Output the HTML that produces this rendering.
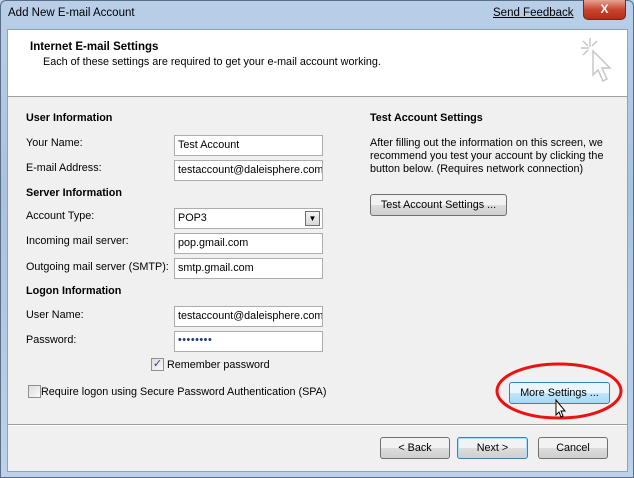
<!DOCTYPE html>
<html><head><meta charset="utf-8"><style>
*{box-sizing:border-box;margin:0;padding:0}
body{width:634px;height:478px;overflow:hidden;background:#bcd2ea;font-family:"Liberation Sans",sans-serif;font-size:10.8px;color:#000;position:relative}
.a{position:absolute;white-space:nowrap}
.frame{position:absolute;left:0;top:0;width:634px;height:478px;background:linear-gradient(#b9cfe8,#a9c2e0 40%,#bcd2ea);border:1px solid #5a6e86;border-radius:6px 6px 0 0}
.client{position:absolute;left:7px;top:29px;width:621px;height:443px;background:#f0f0f0;border:1px solid #8da2bb}
.hdr{position:absolute;left:0;top:0;width:619px;height:67px;background:#fff;border-bottom:1px solid #a0a0a0}
.in{position:absolute;height:21px;background:#fff;border:1px solid #abadb3;padding:3px 0 0 3px;width:149px;overflow:hidden}
.b{font-weight:bold}
.btn{position:absolute;height:22px;border:1px solid #707070;border-radius:3px;background:linear-gradient(#f2f2f2 50%,#dddddd 50%,#cfcfcf);text-align:center;padding-top:4px}
.cb{position:absolute;width:13px;height:13px;border:1px solid #8f8f8f;background:linear-gradient(135deg,#dcdcdc,#fafafa)}
</style></head><body>
<div class="frame"></div>
<div class="a" style="left:8px;top:7px;font-size:11.5px;color:#000">Add New E-mail Account</div>
<div class="a" style="left:493px;top:7px;font-size:11.5px;text-decoration:underline">Send Feedback</div>
<div class="a" style="left:583px;top:0;width:43px;height:20px;border:1px solid #6d2a20;border-top:none;border-radius:0 0 5px 5px;background:linear-gradient(#e8a493,#c7462f 50%,#b82c14);color:#fff;font-weight:bold;font-size:12px;text-align:center;line-height:18px">X</div>
<div class="client">
 <div class="hdr">
  <div class="a b" style="left:22px;top:11px;font-size:11.5px">Internet E-mail Settings</div>
  <div class="a" style="left:35px;top:26px">Each of these settings are required to get your e-mail account working.</div>
  <svg class="a" style="left:569px;top:7px" width="40" height="50" viewBox="0 0 40 50" fill="none" stroke="#c4c4c4" stroke-width="1.4">
   <path d="M13 1v9M4 11h8M6 4l5 5M20 4l-5 5M6 18l5-5"/>
   <path d="M16 14v24l5-5 5 11 4-2-5-11h8z" fill="#fff"/>
  </svg>
 </div>
 <div class="a b" style="left:18px;top:82px">User Information</div>
 <div class="a" style="left:18px;top:107px">Your Name:</div>
 <div class="a" style="left:18px;top:132px">E-mail Address:</div>
 <div class="a b" style="left:18px;top:157px">Server Information</div>
 <div class="a" style="left:18px;top:180px">Account Type:</div>
 <div class="a" style="left:18px;top:205px">Incoming mail server:</div>
 <div class="a" style="left:18px;top:231px">Outgoing mail server (SMTP):</div>
 <div class="a b" style="left:18px;top:255px">Logon Information</div>
 <div class="a" style="left:18px;top:279px">User Name:</div>
 <div class="a" style="left:18px;top:304px">Password:</div>
 <div class="in" style="left:166px;top:105px">Test Account</div>
 <div class="in" style="left:166px;top:130px">testaccount@daleisphere.com</div>
 <div class="in" style="left:166px;top:178px">POP3<div class="a" style="right:2px;top:2px;width:15px;height:15px;border:1px solid #707070;background:linear-gradient(#f4f4f4,#d8d8d8);font-size:8px;text-align:center;line-height:13px">▼</div></div>
 <div class="in" style="left:166px;top:203px">pop.gmail.com</div>
 <div class="in" style="left:166px;top:228px">smtp.gmail.com</div>
 <div class="in" style="left:166px;top:276px">testaccount@daleisphere.com</div>
 <div class="in" style="left:166px;top:301px;padding-top:2px;letter-spacing:0.5px;color:#1a3a7a">••••••••</div>
 <div class="cb" style="left:143px;top:328px;font-size:11px;line-height:10px;color:#24427a;text-align:center">✓</div>
 <div class="a" style="left:159px;top:329px">Remember password</div>
 <div class="cb" style="left:20px;top:355px"></div>
 <div class="a" style="left:33px;top:356px">Require logon using Secure Password Authentication (SPA)</div>
 <div class="a b" style="left:362px;top:82px">Test Account Settings</div>
 <div class="a" style="left:362px;top:107px;line-height:13px">After filling out the information on this screen, we<br>recommend you test your account by clicking the<br>button below. (Requires network connection)</div>
 <div class="btn" style="left:362px;top:164px;width:137px">Test Account Settings ...</div>
 <div class="btn" style="left:501px;top:352px;width:101px;border-color:#3c7fb1;background:linear-gradient(#eaf6fd 50%,#bee6fd 50%,#a7d9f5)">More Settings ...</div>
 <div class="a" style="left:0;top:394px;width:619px;border-top:1px solid #a0a0a0;border-bottom:1px solid #fff"></div>
 <div class="btn" style="left:372px;top:407px;width:70px">&lt; Back</div>
 <div class="btn" style="left:449px;top:407px;width:71px;border-color:#3c7fb1;box-shadow:inset 0 0 0 1px #a6e0fb">Next &gt;</div>
 <div class="btn" style="left:530px;top:407px;width:70px">Cancel</div>
</div>
<svg class="a" style="left:0;top:0" width="634" height="478">
 <ellipse cx="559" cy="391" rx="62" ry="27" fill="none" stroke="#e11" stroke-width="3"/>
 <path d="M556 400v15l3-3 2 5 2-1-2-5h4z" fill="#fff" stroke="#000" stroke-width="1"/>
</svg>
</body></html>
